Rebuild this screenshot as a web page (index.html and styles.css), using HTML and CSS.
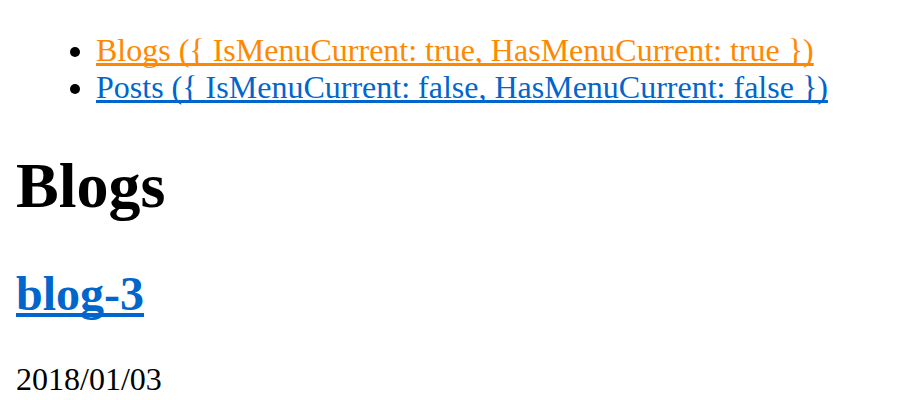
FILE: index.html
```html
<!DOCTYPE html>
<html>
<head>
<meta charset="utf-8">
<link rel="stylesheet" href="styles.css">
</head>
<body>
<ul class="menu">
  <li><a class="current" href="#">Blogs ({ IsMenuCurrent: true, HasMenuCurrent: true })</a></li>
  <li><a href="#">Posts ({ IsMenuCurrent: false, HasMenuCurrent: false })</a></li>
</ul>
<h1 class="title">Blogs</h1>
<h2 class="entry"><a href="#">blog-3</a></h2>
<p class="date">2018/01/03</p>
</body>
</html>
```
FILE: styles.css
```css
html { background: #fff; }
body {
  margin: 16px;
  font-family: "Liberation Serif", "Times New Roman", serif;
  font-size: 32px;
  color: #000;
}
a {
  color: #0066cc;
  text-decoration: underline;
  text-decoration-skip-ink: none;
}
a.current { color: #ff8800; }
.menu {
  margin: 16px 0 32px;
  padding-left: 80px;
}
.title {
  font-size: 64px;
  font-weight: bold;
  margin: 42.88px 0;
}
.entry {
  font-size: 48px;
  font-weight: bold;
  margin: 39.84px 0;
}
.date {
  margin: 32px 0;
}
```
